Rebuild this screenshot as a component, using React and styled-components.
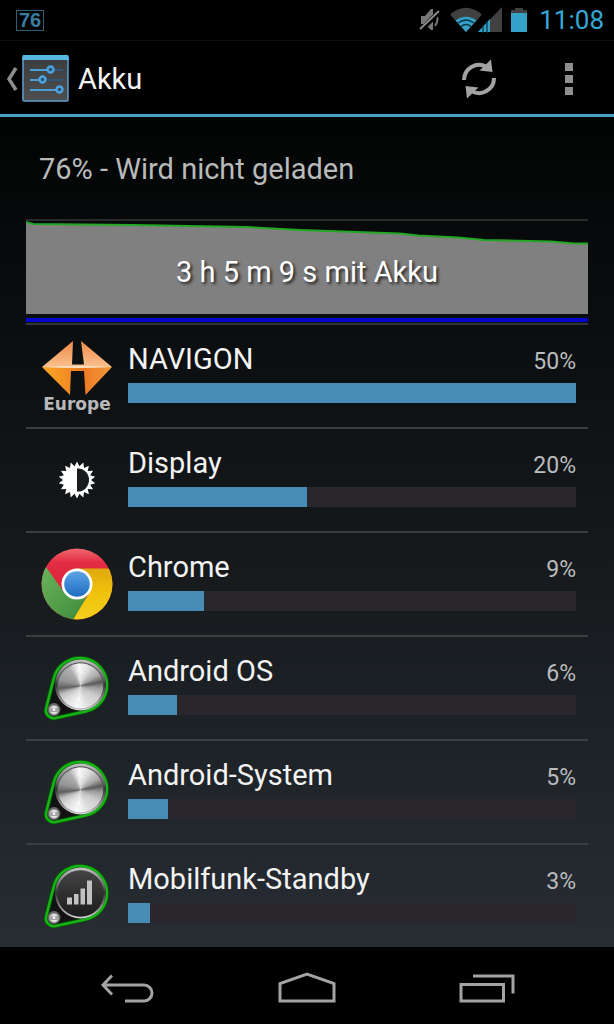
import React from 'react';
import styled, { createGlobalStyle } from 'styled-components';

const GlobalStyle = createGlobalStyle`
  * {
    box-sizing: border-box;
  }

  body {
    margin: 0;
    background-color: #000;
    color: #f3f3f3;
    font-family: Roboto, 'Noto Sans', sans-serif;
  }

  button {
    display: flex;
    align-items: center;
    justify-content: center;
    padding: 0;
    border: 0;
    background: none;
    color: inherit;
    font: inherit;
    cursor: pointer;
  }

  svg {
    display: block;
    flex-shrink: 0;
  }
`;

const Screen = styled.div`
  display: flex;
  flex-direction: column;
  height: 100vh;
  background: linear-gradient(180deg, #000 0%, #020404 12%, #272d33 93%);
`;

const StatusBar = styled.div`
  display: flex;
  align-items: center;
  justify-content: space-between;
  flex-shrink: 0;
  height: 41px;
  padding: 0 10px 0 16px;
  background-color: #000;
  border-bottom: 1px solid #0c0e0f;
`;

const BatteryBadge = styled.span`
  padding: 0 2px;
  border: 1px solid #2c5f78;
  color: #3a7d9f;
  font-family: 'Liberation Sans', Arial, sans-serif;
  font-size: 20px;
  font-weight: 700;
  line-height: 19px;
`;

const StatusIcons = styled.div`
  display: flex;
  align-items: center;
  gap: 9px;
`;

const Clock = styled.time`
  margin-left: 3px;
  color: #35a9d6;
  font-size: 26px;
  line-height: 32px;
`;

const ActionBar = styled.header`
  display: flex;
  align-items: center;
  flex-shrink: 0;
  height: 76px;
  padding: 2px 0 0 6px;
  background-color: #000;
  border-bottom: 3px solid #4a9fc0;
`;

const UpButton = styled.button`
  gap: 4px;
`;

const Title = styled.h1`
  flex: 1;
  margin: 0 0 0 9px;
  font-size: 29px;
  font-weight: 400;
`;

const ActionButton = styled.button`
  width: 90px;
  height: 100%;
`;

const Content = styled.main`
  flex: 1;
  min-height: 0;
  padding: 0 26px;
  overflow: hidden;
`;

const Summary = styled.p`
  height: 102px;
  margin: 0;
  padding: 0 13px;
  color: #b9baba;
  font-size: 29px;
  line-height: 104px;
`;

const ChartBox = styled.section`
  display: grid;
  height: 106px;
  border-top: 2px solid #292b2b;
  border-bottom: 2px solid #33363a;

  & > * {
    grid-area: 1 / 1;
  }
`;

const ChartLabel = styled.span`
  align-self: center;
  justify-self: center;
  color: #fff;
  font-size: 29px;
  text-shadow: 2px 2px 3px #222;
`;

const UsageList = styled.ul`
  margin: 0;
  padding: 0;
  list-style: none;
`;

const UsageRow = styled.li`
  display: flex;
  align-items: center;
  gap: 15px;
  height: 104px;
  padding: 0 12px 0 15px;
  border-bottom: 2px solid #3a3e41;
`;

const IconSlot = styled.div`
  display: flex;
  flex-direction: column;
  align-items: center;
  justify-content: center;
  flex-shrink: 0;
  width: 72px;
  height: 72px;
`;

const IconCaption = styled.span`
  color: #b8b9ba;
  font-family: 'DejaVu Sans', sans-serif;
  font-size: 17px;
  font-weight: 700;
  line-height: 16px;
`;

const Usage = styled.div`
  flex: 1;
  padding-bottom: 9px;
`;

const UsageHeader = styled.div`
  display: flex;
  align-items: baseline;
  justify-content: space-between;
  margin-bottom: 3px;
  line-height: 36px;
`;

const AppName = styled.span`
  font-size: 29px;
`;

const Percent = styled.span`
  color: #b9bbbc;
  font-size: 23px;
`;

const Track = styled.div`
  height: 20px;
  background-color: #29272c;
`;

const Fill = styled.div`
  height: 100%;
  background-color: #468cb5;
`;

const NavBar = styled.nav`
  display: flex;
  align-items: center;
  justify-content: center;
  gap: 90px;
  flex-shrink: 0;
  height: 77px;
  padding-top: 4px;
  background-color: #000;
`;

const NavButton = styled.button`
  width: 90px;
  height: 60px;
`;

function MuteIcon() {
  return (
    <svg width="22" height="24" viewBox="0 0 22 24">
      <path d="M2 8h4l6-7h2v21h-2l-6-6H2z" fill="#777" />
      <path d="M16 5q5 6 0 13" fill="none" stroke="#777" strokeWidth="2" />
      <path d="M2 22 21 3" stroke="#000" strokeWidth="5" />
      <path d="M1 21 20 3" stroke="#8a8a8a" strokeWidth="2" />
    </svg>
  );
}

function ConnectionIcon() {
  return (
    <svg width="52" height="26" viewBox="0 0 52 26">
      <path d="M0 7.500Q16-6 32 7.500L16 25z" fill="#414141" />
      <path d="M5.500 13.500Q16 6 26.500 13.500L16 25z" fill="#35a0c8" />
      <path d="M8 16q8-6 16 0M11 19.500q5-4 10 0" fill="none" stroke="#0b3343" strokeWidth="1.300" />
      <path d="M52 0v25H27z" fill="#000" stroke="#000" strokeWidth="4" />
      <path d="M52 0v25H28z" fill="#414141" />
      <path d="M40 12v13H28z" fill="#35a0c8" />
      <path d="M33 18v8M37 14v12" stroke="#0b3343" strokeWidth="1.200" />
    </svg>
  );
}

function BatteryIcon() {
  return (
    <svg width="16" height="26" viewBox="0 0 16 26">
      <path d="M4 1h8v2h4v4H0V3h4z" fill="#414141" />
      <path d="M0 6h16v19H0z" fill="#35a0c8" />
    </svg>
  );
}

function SettingsIcon() {
  return (
    <svg width="47" height="47" viewBox="0 0 47 47">
      <defs>
        <linearGradient id="settingsFace" x1="0" y1="0" x2="0" y2="1">
          <stop offset="0" stopColor="#3a3c3e" />
          <stop offset="1" stopColor="#4c4e50" />
        </linearGradient>
      </defs>
      <rect x="1" y="1" width="45" height="45" rx="1" fill="url(#settingsFace)" stroke="#5f9fd0" strokeWidth="1.500" />
      <path d="M1 0h45l1 5H0z" fill="#56b7e2" />
      <g stroke="#2c5f8a" strokeWidth="1.500">
        <path d="M29 15h12M21 25h20M35 35h6" />
      </g>
      <path d="M8 15h18M8 25h10M8 35h27" stroke="#4d9ed6" strokeWidth="2.200" />
      <g fill="#31506b" stroke="#4ba3df" strokeWidth="2.400">
        <circle cx="28.500" cy="14.500" r="3" />
        <circle cx="20.500" cy="24.500" r="3" />
        <circle cx="37.500" cy="34.500" r="3" />
      </g>
    </svg>
  );
}

function RefreshIcon() {
  return (
    <svg width="36" height="40" viewBox="0 0 36 40">
      <g fill="none" stroke="#a3a3a3" strokeWidth="4">
        <path d="M3 21A15 15 0 0 1 25.500 8" />
        <path d="M33 19A15 15 0 0 1 10.500 32" />
      </g>
      <path d="M30 .5 31.500 13 18.500 11.500zM6 39.500 4.500 27 17.500 28.500z" fill="#a3a3a3" />
    </svg>
  );
}

function NavigonIcon() {
  return (
    <svg width="72" height="55" viewBox="0 0 72 55">
      <defs>
        <linearGradient id="navTop" x1="0" y1="0" x2="0" y2="1">
          <stop offset="0" stopColor="#f08a45" />
          <stop offset="1" stopColor="#f9c08f" />
        </linearGradient>
        <linearGradient id="navBottom" x1="0" y1="0" x2="1" y2="0">
          <stop offset="0" stopColor="#f7a823" />
          <stop offset="0.600" stopColor="#ee7a22" />
          <stop offset="1" stopColor="#f39a3c" />
        </linearGradient>
      </defs>
      <path d="M1 26 32 0 31 23.500H43L40 0 71 26z" fill="url(#navTop)" />
      <path d="M1 26H71L44.500 54 43 30H30L29 54z" fill="url(#navBottom)" />
      <path d="M1 26q35-2 70 0q-35 2-70 0" fill="#fde3c6" />
    </svg>
  );
}

function DisplayIcon() {
  const teeth = 18;
  const points = Array.from({ length: teeth * 2 }, (_, i) => {
    const radius = i % 2 === 0 ? 18.5 : 14;
    const angle = (i * Math.PI) / teeth - Math.PI / 2;
    return `${19 + radius * Math.cos(angle)},${19 + radius * Math.sin(angle)}`;
  });

  return (
    <svg width="38" height="38" viewBox="0 0 38 38">
      <polygon points={points.join(' ')} fill="#fff" />
      <path d="M19 7.500h1a11 11.500 0 0 1 0 23h-1z" fill="#191c1f" />
    </svg>
  );
}

function ChromeIcon() {
  return (
    <svg width="72" height="72" viewBox="0 0 72 72">
      <defs>
        <clipPath id="chromeDisc">
          <circle cx="36" cy="36" r="35.500" />
        </clipPath>
        <linearGradient id="chromeRed" x1="0" y1="0" x2="0" y2="1">
          <stop offset="0" stopColor="#ef6a70" />
          <stop offset="0.200" stopColor="#e32d42" />
          <stop offset="1" stopColor="#d0162f" />
        </linearGradient>
        <linearGradient id="chromeGreen" x1="0" y1="0" x2="1" y2="1">
          <stop offset="0" stopColor="#6cb45d" />
          <stop offset="1" stopColor="#3c8a3a" />
        </linearGradient>
        <linearGradient id="chromeYellow" x1="0" y1="0" x2="0" y2="1">
          <stop offset="0" stopColor="#dfa80c" />
          <stop offset="0.500" stopColor="#f0c30c" />
          <stop offset="1" stopColor="#f3cf1d" />
        </linearGradient>
        <linearGradient id="chromeBlue" x1="0" y1="0" x2="0" y2="1">
          <stop offset="0" stopColor="#5ba4e8" />
          <stop offset="1" stopColor="#1f6cc0" />
        </linearGradient>
      </defs>
      <g clipPath="url(#chromeDisc)">
        <rect width="72" height="72" fill="url(#chromeRed)" />
        <path d="M36 20.500H72V72H31L49 44z" fill="url(#chromeYellow)" />
        <path d="M5 19 22.500 43.500 36 51.500 45.500 49 32 72H0V19z" fill="url(#chromeGreen)" />
      </g>
      <circle cx="36" cy="36" r="15.500" fill="#fff" />
      <circle cx="36" cy="36" r="12.800" fill="url(#chromeBlue)" />
    </svg>
  );
}

// Grey level of the brushed metal, by angle in degrees clockwise from the right.
const METAL_STOPS = [
  [0, 150], [30, 205], [70, 225], [95, 250], [130, 225], [155, 190],
  [172, 95], [195, 150], [235, 175], [262, 250], [290, 225], [325, 170],
  [348, 90], [360, 150],
];

function metalShade(angle) {
  const next = METAL_STOPS.findIndex(([stop]) => stop >= angle) || 1;
  const [a0, g0] = METAL_STOPS[next - 1];
  const [a1, g1] = METAL_STOPS[next];
  const grey = Math.round(g0 + ((g1 - g0) * (angle - a0)) / (a1 - a0));
  return `rgb(${grey}, ${grey}, ${grey})`;
}

function MetalDisc({ cx, cy, r }) {
  const point = (deg) => {
    const rad = (deg * Math.PI) / 180;
    return `${cx + r * Math.cos(rad)} ${cy + r * Math.sin(rad)}`;
  };

  return Array.from({ length: 90 }, (_, i) => i * 4).map((deg) => (
    <path
      key={deg}
      d={`M${cx} ${cy}L${point(deg)}A${r} ${r} 0 0 1 ${point(deg + 6)}z`}
      fill={metalShade(deg)}
    />
  ));
}

function PulleyIcon({ id, signal }) {
  return (
    <svg width="72" height="72" viewBox="0 0 72 72">
      <defs>
        <linearGradient id={`${id}Rim`} x1="0" y1="0" x2="0" y2="1">
          <stop offset="0" stopColor="#c4c4c4" />
          <stop offset="0.350" stopColor="#6d6d6d" />
          <stop offset="0.500" stopColor="#333" />
          <stop offset="0.700" stopColor="#777" />
          <stop offset="1" stopColor="#d6d6d6" />
        </linearGradient>
        <linearGradient id={`${id}Face`} x1="0" y1="0" x2="0" y2="1">
          <stop offset="0" stopColor="#444" />
          <stop offset="1" stopColor="#1b1b1b" />
        </linearGradient>
      </defs>
      <path
        d="M5.200 56 12.800 26.300A27 27 0 1 1 44.600 59.400L14.700 66A8 8 0 0 1 5.200 56z"
        fill="#101312"
        stroke="#0b4a0c"
        strokeWidth="4.500"
      />
      <path
        d="M5.200 56 12.800 26.300A27 27 0 1 1 44.600 59.400L14.700 66A8 8 0 0 1 5.200 56z"
        fill="none"
        stroke="#16b316"
        strokeWidth="2.600"
      />
      <circle cx="39.500" cy="33" r="25.500" fill={`url(#${id}Rim)`} />
      <circle cx="39.500" cy="33.500" r="23.300" fill={signal ? `url(#${id}Face)` : '#555'} />
      {signal ? (
        <path d="M26 37.500h5v7h-5zM33 34h4.500v10.500H33zM39.500 28.500H44v16h-4.500zM46 20.500h5v24h-5z" fill="#c2c2c2" />
      ) : (
        <MetalDisc cx={39.5} cy={34} r={22.5} />
      )}
      <circle cx="13" cy="57.500" r="6.500" fill="#666" />
      <circle cx="13" cy="58" r="5" fill="#a5a5a5" />
      <path d="M9 56q4-4 8 0zM9.500 60q3.500 4 7 0z" fill="#e4e4e4" />
      <circle cx="13" cy="57.500" r="1.500" fill="#eee" />
    </svg>
  );
}

function BatteryChart() {
  const curve = 'M0 1 7 3 107 4 221 6 274 9 374 12.500 392 14.500 432 16.500 458 19 525 20.500 548 22.500H562';

  return (
    <svg width="100%" height="102" viewBox="0 0 562 102" preserveAspectRatio="none">
      <path d={`${curve}V93H0z`} fill="#808080" />
      <path d={curve} fill="none" stroke="#22a822" strokeWidth="2" />
      <path d="M0 99H562" stroke="#0404cc" strokeWidth="4" />
    </svg>
  );
}

const apps = [
  { name: 'NAVIGON', percent: 50, width: 100, icon: <NavigonIcon />, caption: 'Europe' },
  { name: 'Display', percent: 20, width: 40, icon: <DisplayIcon /> },
  { name: 'Chrome', percent: 9, width: 17, icon: <ChromeIcon /> },
  { name: 'Android OS', percent: 6, width: 11, icon: <PulleyIcon id="os" /> },
  { name: 'Android-System', percent: 5, width: 9, icon: <PulleyIcon id="system" /> },
  { name: 'Mobilfunk-Standby', percent: 3, width: 5, icon: <PulleyIcon id="radio" signal /> },
];

function App() {
  return (
    <Screen>
      <GlobalStyle />
      <StatusBar>
        <BatteryBadge>76</BatteryBadge>
        <StatusIcons>
          <MuteIcon />
          <ConnectionIcon />
          <BatteryIcon />
          <Clock>11:08</Clock>
        </StatusIcons>
      </StatusBar>

      <ActionBar>
        <UpButton aria-label="Zurück">
          <svg width="12" height="24" viewBox="0 0 12 24">
            <path d="M10 1 3 12l7 11" fill="none" stroke="#8d8d8d" strokeWidth="3.500" />
          </svg>
          <SettingsIcon />
        </UpButton>
        <Title>Akku</Title>
        <ActionButton aria-label="Aktualisieren">
          <RefreshIcon />
        </ActionButton>
        <ActionButton aria-label="Menü">
          <svg width="8" height="32" viewBox="0 0 8 32">
            <path d="M0 0h8v8H0zM0 12h8v8H0zM0 24h8v8H0z" fill="#8f8f8f" />
          </svg>
        </ActionButton>
      </ActionBar>

      <Content>
        <Summary>76% - Wird nicht geladen</Summary>
        <ChartBox>
          <BatteryChart />
          <ChartLabel>3 h 5 m 9 s mit Akku</ChartLabel>
        </ChartBox>
        <UsageList>
          {apps.map((app) => (
            <UsageRow key={app.name}>
              <IconSlot>
                {app.icon}
                {app.caption && <IconCaption>{app.caption}</IconCaption>}
              </IconSlot>
              <Usage>
                <UsageHeader>
                  <AppName>{app.name}</AppName>
                  <Percent>{app.percent}%</Percent>
                </UsageHeader>
                <Track>
                  <Fill style={{ width: `${app.width}%` }} />
                </Track>
              </Usage>
            </UsageRow>
          ))}
        </UsageList>
      </Content>

      <NavBar>
        <NavButton aria-label="Zurück">
          <svg width="54" height="32" viewBox="0 0 54 32">
            <path d="M3 13H44a8 8 0 0 1 0 16H25M12 3.500 3 13l9 9.500" fill="none" stroke="#a3a3a3" strokeWidth="3" />
          </svg>
        </NavButton>
        <NavButton aria-label="Startseite">
          <svg width="58" height="32" viewBox="0 0 58 32">
            <path d="M2 29V11.500L29 2l27 9.500V29z" fill="none" stroke="#a3a3a3" strokeWidth="3" />
          </svg>
        </NavButton>
        <NavButton aria-label="Letzte Apps">
          <svg width="56" height="32" viewBox="0 0 56 32">
            <path d="M2 12.500h42.500V29H2zM14 4h40v17.500" fill="none" stroke="#a3a3a3" strokeWidth="3" />
          </svg>
        </NavButton>
      </NavBar>
    </Screen>
  );
}

export default App;
